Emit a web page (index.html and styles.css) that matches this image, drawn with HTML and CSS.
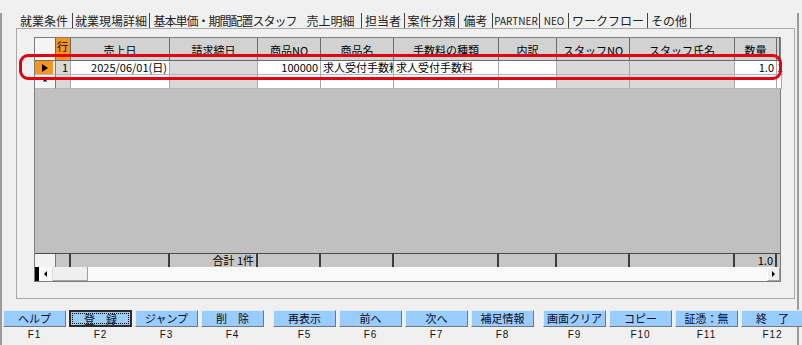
FILE: index.html
```html
<!DOCTYPE html>
<html lang="ja">
<head>
    <meta charset="UTF-8">
    <title>売上明細</title>
    <link rel="stylesheet" href="styles.css">
</head>
<body>
    <div class="window">
        <div class="tabs">
            <span class="tab" style="width:57px">就業条件</span>
            <span class="tab" style="width:77px">就業現場詳細</span>
            <span class="tab tight nosep" style="width:150px">基本単価・期間配置スタッフ</span>
            <span class="tab active" style="width:62px">売上明細</span>
            <span class="tab" style="width:43px">担当者</span>
            <span class="tab" style="width:54px">案件分類</span>
            <span class="tab" style="width:34px">備考</span>
            <span class="tab latin" style="width:47px">PARTNER</span>
            <span class="tab latin" style="width:29px">NEO</span>
            <span class="tab" style="width:79px">ワークフロー</span>
            <span class="tab" style="width:43px">その他</span>
        </div>

        <div class="panel">
            <div class="grid">
                <div class="row head">
                    <span class="sel"></span>
                    <span class="no">行</span>
                    <span>売上日</span>
                    <span>請求締日</span>
                    <span>商品NO</span>
                    <span>商品名</span>
                    <span>手数料の種類</span>
                    <span>内訳</span>
                    <span>スタッフNO</span>
                    <span>スタッフ氏名</span>
                    <span>数量</span>
                    <span></span>
                </div>
                <div class="row data">
                    <span class="sel current"><svg width="6" height="8" viewBox="0 0 6 8"><polygon points="0,0 6,4 0,8" fill="#000"/></svg></span>
                    <span class="g r">1</span>
                    <span class="r">2025/06/01(日)</span>
                    <span class="g"></span>
                    <span class="r">100000</span>
                    <span class="clip">求人受付手数料</span>
                    <span>求人受付手数料</span>
                    <span></span>
                    <span class="g"></span>
                    <span class="g"></span>
                    <span class="r">1.0</span>
                    <span class="cut clip">1</span>
                </div>
                <div class="row data">
                    <span class="sel star">*</span>
                    <span class="g"></span>
                    <span></span>
                    <span class="g"></span>
                    <span></span>
                    <span></span>
                    <span></span>
                    <span></span>
                    <span class="g"></span>
                    <span class="g"></span>
                    <span></span>
                    <span></span>
                </div>
                <div class="blank"></div>
                <div class="row foot">
                    <span class="sel"></span>
                    <span></span>
                    <span></span>
                    <span>合計 1件</span>
                    <span></span>
                    <span></span>
                    <span></span>
                    <span></span>
                    <span></span>
                    <span></span>
                    <span>1.0</span>
                    <span></span>
                </div>
                <div class="hscroll">
                    <span class="sb-mark"></span>
                    <span class="sb-btn"><svg width="3" height="6" viewBox="0 0 3 6"><polygon points="3,0 0,3 3,6" fill="#000"/></svg></span>
                    <span class="sb-thumb"></span>
                    <span class="sb-track"></span>
                    <span class="sb-btn right"><svg width="3" height="6" viewBox="0 0 3 6"><polygon points="0,0 3,3 0,6" fill="#000"/></svg></span>
                </div>
            </div>
        </div>

        <div class="fkeys">
            <div class="fgroup">
                <div class="fkey"><button class="fbtn">ヘルプ</button><span class="flabel">F1</span></div>
                <div class="fkey"><button class="fbtn focus">登　録</button><span class="flabel">F2</span></div>
                <div class="fkey"><button class="fbtn">ジャンプ</button><span class="flabel">F3</span></div>
                <div class="fkey"><button class="fbtn">削　除</button><span class="flabel">F4</span></div>
            </div>
            <div class="fgroup">
                <div class="fkey"><button class="fbtn">再表示</button><span class="flabel">F5</span></div>
                <div class="fkey"><button class="fbtn">前へ</button><span class="flabel">F6</span></div>
                <div class="fkey"><button class="fbtn">次へ</button><span class="flabel">F7</span></div>
                <div class="fkey"><button class="fbtn">補足情報</button><span class="flabel">F8</span></div>
            </div>
            <div class="fgroup">
                <div class="fkey"><button class="fbtn">画面クリア</button><span class="flabel">F9</span></div>
                <div class="fkey"><button class="fbtn">コピー</button><span class="flabel">F10</span></div>
                <div class="fkey"><button class="fbtn">証憑：無</button><span class="flabel">F11</span></div>
                <div class="fkey"><button class="fbtn">終　了</button><span class="flabel">F12</span></div>
            </div>
        </div>
    </div>

    <div class="mark"></div>
</body>
</html>
```

FILE: styles.css
```css
body {
    margin: 0;
    width: 802px;
    height: 345px;
    overflow: hidden;
    position: relative;
    background: #f0f0f0;
    color: #000;
    font-family: "Noto Sans CJK JP", "Liberation Sans", sans-serif;
}

.window {
    width: 799px;
    height: 344px;
    box-sizing: border-box;
    border-left: 2px solid #9b9b9b;
    border-right: 2px solid #9b9b9b;
    border-bottom: 2px solid #8a8a8a;
}

/* tabs */
.tabs {
    display: flex;
    margin: 13px 0 0 14px;
    height: 15px;
    font-size: 12px;
    line-height: 15px;
    color: #222;
}

.tab {
    display: flex;
    justify-content: center;
    white-space: nowrap;
    box-sizing: border-box;
    border-right: 1px solid #444;
}

.tab.nosep {
    border-right: none;
}

.tab.tight {
    letter-spacing: -1px;
}

.tab.latin {
    font-size: 10px;
}

.panel {
    margin-left: 14px;
    width: 779px;
    height: 271px;
    box-sizing: border-box;
    border: 1px solid #a8a8a8;
    padding: 8px 0 0 17px;
}

/* grid */
.grid {
    width: 747px;
    height: 245px;
    box-sizing: border-box;
    border: 1px solid #7c7c7c;
    background: #c0c0c0;
    display: flex;
    flex-direction: column;
    font-size: 11px;
}

.row {
    display: grid;
    grid-template-columns: 21px 15px 99px 88px 63px 73px 105px 58px 73px 105px 42px 1fr;
}

.row > span {
    box-sizing: border-box;
    white-space: nowrap;
}

.row > .clip {
    overflow-x: clip;
    overflow-y: visible;
}

.head {
    height: 23px;
}

.head span {
    background: #d2d2d2;
    border-right: 1px solid #6a6a6a;
    border-bottom: 1px solid #6a6a6a;
    text-align: center;
    padding-top: 5px;
    line-height: 14px;
}

.head .sel {
    background: #f4f4f4;
}

.head .no {
    background: #f7941d;
    padding-top: 1px;
    text-align: left;
    padding-left: 1px;
}

.data {
    height: 14px;
}

.data span {
    background: #fff;
    border-right: 1px solid #a8a8a8;
    border-bottom: 1px solid #b8b8b8;
    line-height: 13px;
    padding: 0 2px;
}

.data .g {
    background: #d9d9d9;
}

.data .r {
    text-align: right;
}

.data .sel {
    display: flex;
    align-items: center;
    justify-content: center;
    background: #f4f4f4;
    border-right-color: #7a7a7a;
}

.data .current {
    background: #f7941d;
    box-shadow: inset -2px 0 0 #f4f4f4;
}

.data .star {
    font-size: 12px;
    font-weight: bold;
}

.data .cut {
    padding: 0;
    border-right: none;
}

.blank {
    flex: 1;
}

.foot {
    height: 14px;
    box-sizing: border-box;
    border-top: 1px solid #4a4a4a;
}

.foot span {
    background: #c6c6c6;
    border-right: 2px solid #3c3c3c;
    line-height: 13px;
    text-align: right;
    padding-right: 2px;
}

.foot .sel {
    background: #f2f2f2;
    border-right: 1px solid #7a7a7a;
}

.foot span:last-child {
    border-right: none;
}

/* horizontal scrollbar */
.hscroll {
    height: 14px;
    display: flex;
    background: #f9f9f9;
}

.sb-mark {
    width: 4px;
    background: #000;
}

.sb-btn {
    width: 14px;
    display: flex;
    align-items: center;
    justify-content: center;
    box-sizing: border-box;
    border-right: 1px solid #dcdcdc;
}

.sb-btn.right {
    width: 13px;
    border: 1px solid #a0a0a0;
    border-top-color: #fff;
    border-left-color: #fff;
    background: #f0f0f0;
}

.sb-thumb {
    width: 35px;
    box-sizing: border-box;
    background: #efefef;
    border-right: 1px solid #a0a0a0;
    border-bottom: 1px solid #a0a0a0;
}

.sb-track {
    flex: 1;
}

/* function keys */
.fkeys {
    display: flex;
    gap: 9px;
    margin: 11px 0 0 1px;
}

.fgroup {
    display: flex;
    gap: 3px;
}

.fkey {
    display: flex;
    flex-direction: column;
    align-items: center;
    width: 63px;
}

.fbtn {
    width: 63px;
    height: 17px;
    margin: 0;
    padding: 0;
    box-sizing: border-box;
    background: #99ccff;
    border: 1px solid;
    border-color: #dcefff #767676 #767676 #dcefff;
    font-family: "Noto Sans CJK JP", sans-serif;
    font-size: 11px;
    line-height: 15px;
    color: #0a0a20;
    cursor: pointer;
}

.fbtn.focus {
    border: 2px solid #2b2b2b;
    outline: 1px dotted #000;
    outline-offset: -4px;
}

.flabel {
    margin-top: 2px;
    font-family: "Liberation Sans", sans-serif;
    font-size: 10px;
    line-height: 12px;
    letter-spacing: 1px;
    color: #111;
}

/* annotation overlay */
.mark {
    position: absolute;
    left: 19px;
    top: 54px;
    width: 763px;
    height: 26px;
    box-sizing: border-box;
    border: 3px solid #e3000f;
    border-radius: 9px;
}
```
